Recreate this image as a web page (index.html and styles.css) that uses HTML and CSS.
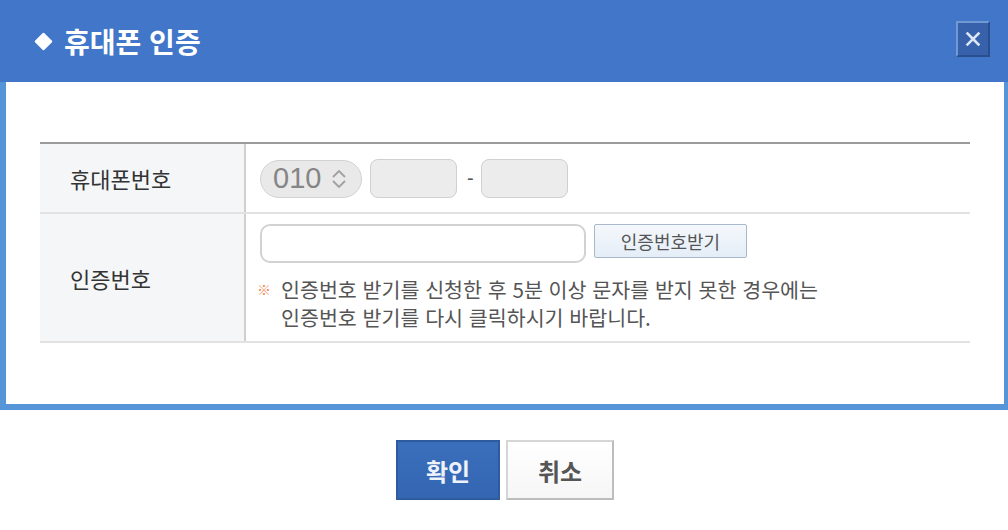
FILE: index.html
```html
<!DOCTYPE html>
<html lang="ko">
<head>
<meta charset="utf-8">
<title>휴대폰 인증</title>
<link rel="stylesheet" href="styles.css">
</head>
<body>
<div class="dialog">
  <div class="header">
    <h1 class="title"><span class="diamond"></span>휴대폰 인증</h1>
    <button class="close" type="button" aria-label="닫기">
      <svg width="18" height="18" viewBox="0 0 18 18"><path d="M3.5 3.5 L14.5 14.5 M14.5 3.5 L3.5 14.5" stroke="#dce6f5" stroke-width="2.5" stroke-linecap="square"/></svg>
    </button>
  </div>
  <div class="frame">
    <div class="form-table">
      <div class="row row-phone">
        <div class="th">휴대폰번호</div>
        <div class="td phone">
          <div class="select">010
            <svg class="chev" width="16" height="20" viewBox="0 0 16 20"><path d="M2 8 L8 2 L14 8 M2 12 L8 18 L14 12" fill="none" stroke="#a0a0a0" stroke-width="1.8"/></svg>
          </div>
          <div class="field small"></div>
          <span class="dash">-</span>
          <div class="field small"></div>
        </div>
      </div>
      <div class="row row-code">
        <div class="th">인증번호</div>
        <div class="td code">
          <div class="code-line">
            <div class="field wide"></div>
            <button class="get-code" type="button">인증번호받기</button>
          </div>
          <p class="note"><span class="mark">※</span>인증번호 받기를 신청한 후 5분 이상 문자를 받지 못한 경우에는<br>인증번호 받기를 다시 클릭하시기 바랍니다.</p>
        </div>
      </div>
    </div>
  </div>
  <div class="actions">
    <button class="btn ok" type="button">확인</button>
    <button class="btn cancel" type="button">취소</button>
  </div>
</div>
</body>
</html>
```
FILE: styles.css
```css
* { box-sizing: border-box; }
html, body { margin: 0; padding: 0; background: #fff; }
body { font-family: "Noto Sans CJK KR", "Noto Sans", sans-serif; width: 1008px; height: 530px; overflow: hidden; }

.header {
  height: 82px;
  background: #4176c9;
  display: flex;
  align-items: center;
  justify-content: space-between;
  padding: 0 18px 0 34px;
}
.title {
  margin: 0;
  color: #fff;
  font-size: 28px;
  font-weight: 700;
  display: flex;
  align-items: center;
  line-height: 1;
  letter-spacing: 0;
}
.diamond {
  width: 13px;
  height: 13px;
  background: #fff;
  transform: rotate(45deg);
  margin: 0 14px 0 3px;
  border-radius: 1px;
}
.close {
  width: 34px;
  height: 36px;
  margin-top: -4px;
  background: #3762ab;
  border: 2px solid;
  border-color: #7099d6 #2a4f8f #2a4f8f #7099d6;
  padding: 0;
  display: flex;
  align-items: center;
  justify-content: center;
}

.frame {
  height: 328px;
  border: solid #5595d8;
  border-width: 0 4px 6px 6px;
  padding: 60px 34px 0 34px;
}
.form-table {
  border-top: 2px solid #9b9b9b;
}
.row {
  display: grid;
  grid-template-columns: 206px 1fr;
  border-bottom: 2px solid #e2e2e2;
}
.th {
  background: #f5f6f8;
  border-right: 2px solid #cfcfcf;
  color: #333;
  font-size: 22px;
  display: flex;
  align-items: center;
  padding-left: 30px;
}
.row-phone { height: 70px; }
.row-code { height: 129px; }

.td { padding-left: 14px; }
.phone { display: flex; align-items: center; padding-top: 1px; }
.select {
  width: 102px;
  height: 38px;
  border: 1px solid #d2d2d2;
  border-radius: 19px;
  background: #e9e9e9;
  color: #858585;
  font-family: "Liberation Sans", "Noto Sans", sans-serif;
  font-size: 29px;
  display: flex;
  align-items: center;
  padding-left: 12px;
  line-height: 1;
}
.chev { margin-left: 10px; }
.field {
  height: 39px;
  border: 1px solid #d0d0d0;
  border-radius: 8px;
  background: #ececec;
}
.small { width: 87px; margin-left: 8px; }
.dash { color: #555; font-size: 20px; margin: 0 7px 0 10px; font-family: "Liberation Sans", sans-serif; }
.dash + .small { margin-left: 0; }

.code { padding-top: 10px; }
.code-line { display: flex; align-items: flex-start; }
.wide { width: 326px; background: #fff; border: 2px solid #d2d2d2; border-radius: 10px; }
.get-code {
  margin-left: 8px;
  width: 153px;
  height: 34px;
  background: linear-gradient(#f4f8fc, #e4edf7);
  border: 1px solid #a9b9cc;
  border-radius: 2px;
  color: #555;
  font-family: "Noto Sans CJK KR", sans-serif;
  font-size: 18px;
  padding: 0;
}
.note {
  margin: 12px 0 0 0;
  color: #555;
  font-size: 20.6px;
  line-height: 28px;
  padding-left: 21px;
  position: relative;
}
.mark {
  position: absolute;
  left: -3px;
  top: 0;
  color: #f0884a;
  font-size: 14px;
  font-weight: 700;
}

.actions {
  display: flex;
  justify-content: center;
  gap: 6px;
  padding-top: 30px;
  padding-left: 2px;
}
.btn {
  height: 60px;
  font-family: "Noto Sans CJK KR", sans-serif;
  font-size: 24px;
  font-weight: 700;
  padding: 0;
}
.ok {
  width: 104px;
  background: linear-gradient(#3a6fbc, #3466b2);
  border: 2px solid #2e5a9e;
  color: #eef3fb;
}
.cancel {
  width: 108px;
  background: linear-gradient(#ffffff, #f6f6f6);
  border: 2px solid #d6d6d6;
  border-right-color: #bdbdbd;
  border-bottom-color: #bdbdbd;
  color: #555;
}
```
